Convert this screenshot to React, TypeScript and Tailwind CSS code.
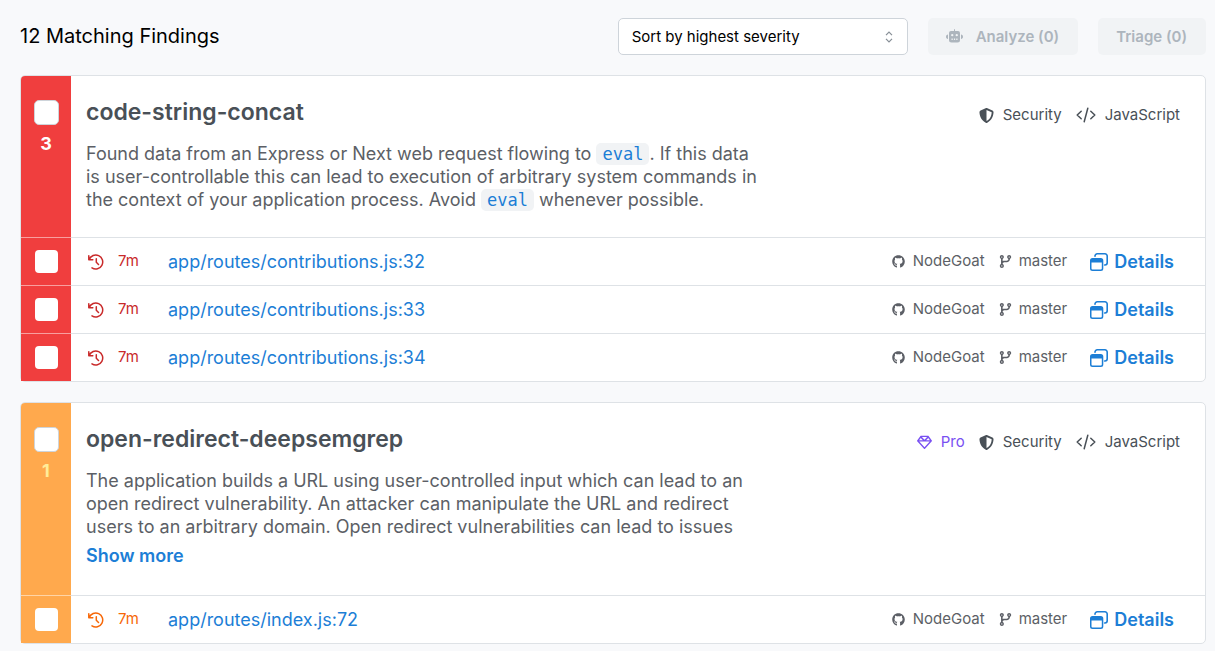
import type { ReactNode } from "react";
import { FaCodeBranch, FaGithub, FaRegGem, FaShieldHalved } from "react-icons/fa6";

type Tone = "red" | "orange";

interface Finding {
  path: string;
  age: string;
  repo: string;
  branch: string;
}

interface Rule {
  name: string;
  tone: Tone;
  pro: boolean;
  description: ReactNode;
  truncated: boolean;
  findings: Finding[];
}

const tones = {
  red: { strip: "bg-[#f03e3e]", count: "text-white", age: "text-[#c92a2a]" },
  orange: { strip: "bg-[#ffa94d]", count: "text-[#ffec99]", age: "text-[#f76707]" },
};

function Code({ children }: { children: ReactNode }) {
  return (
    <code className="rounded-[5px] bg-[#f1f3f5] px-1.5 py-px font-['DejaVu_Sans_Mono',monospace] text-[17px] leading-none text-[#1c7ed6]">
      {children}
    </code>
  );
}

const finding = (path: string): Finding => ({ path, age: "7m", repo: "NodeGoat", branch: "master" });

const rules: Rule[] = [
  {
    name: "code-string-concat",
    tone: "red",
    pro: false,
    truncated: false,
    description: (
      <>
        Found data from an Express or Next web request flowing to <Code>eval</Code>. If this data is
        user-controllable this can lead to execution of arbitrary system commands in the context of
        your application process. Avoid <Code>eval</Code> whenever possible.
      </>
    ),
    findings: [
      finding("app/routes/contributions.js:32"),
      finding("app/routes/contributions.js:33"),
      finding("app/routes/contributions.js:34"),
    ],
  },
  {
    name: "open-redirect-deepsemgrep",
    tone: "orange",
    pro: true,
    truncated: true,
    description:
      "The application builds a URL using user-controlled input which can lead to an open redirect vulnerability. An attacker can manipulate the URL and redirect users to an arbitrary domain. Open redirect vulnerabilities can lead to issues",
    findings: [finding("app/routes/index.js:72")],
  },
];

function RobotIcon() {
  return (
    <svg viewBox="0 0 34 36" className="h-[18px] w-[17px]" aria-hidden="true">
      <g fill="currentColor">
        <rect x="16" y="0" width="2" height="6" rx="1" />
        <path
          fillRule="evenodd"
          d="M10 4h14a4 4 0 0 1 4 4v14a5 5 0 0 1-5 5H11a5 5 0 0 1-5-5V8a4 4 0 0 1 4-4Zm2.500 6a2.300 2.300 0 1 0 0 4.600a2.300 2.300 0 0 0 0-4.600Zm9 0a2.300 2.300 0 1 0 0 4.600a2.300 2.300 0 0 0 0-4.600ZM11 19v3h2.500v-3Zm4.800 0v3h2.500v-3Zm4.700 0v3H23v-3Z"
        />
        <path d="M4 11v9C1.500 20 0 18 0 15.500S1.500 11 4 11ZM30 11v9c2.500 0 4-2 4-4.500S32.500 11 30 11Z" />
      </g>
    </svg>
  );
}

function CodeIcon() {
  return (
    <svg
      viewBox="0 0 20 16"
      className="h-4 w-5"
      fill="none"
      stroke="currentColor"
      strokeWidth="1.5"
      strokeLinecap="round"
      strokeLinejoin="round"
      aria-hidden="true"
    >
      <path d="M5.200 4.200 1.200 8l4 3.800M14.800 4.200l4 3.800-4 3.800M11.800 1.200 8.200 14.800" />
    </svg>
  );
}

function HistoryIcon() {
  return (
    <svg
      viewBox="0 0 16 16"
      className="size-4"
      fill="none"
      stroke="currentColor"
      strokeWidth="1.5"
      strokeLinecap="round"
      strokeLinejoin="round"
      aria-hidden="true"
    >
      <path d="M.8 1.700v4h4M1.200 5.400A7 7 0 1 1 4 13.900M8.300 4.700v3.600l2.200 2.200" />
    </svg>
  );
}

function WindowsIcon() {
  return (
    <svg viewBox="0 0 18 18" className="size-[18px]" aria-hidden="true">
      <path
        d="M5 3.300V3a2.200 2.200 0 0 1 2.200-2.200H15A2.200 2.200 0 0 1 17.200 3v6.800A2.200 2.200 0 0 1 15 12h-.4"
        fill="none"
        stroke="currentColor"
        strokeWidth="1.600"
        strokeLinecap="round"
      />
      <path
        fill="currentColor"
        fillRule="evenodd"
        d="M2.500 5h8.300a2.500 2.500 0 0 1 2.500 2.500v8a2.500 2.500 0 0 1-2.500 2.500H2.500A2.500 2.500 0 0 1 0 15.500v-8A2.500 2.500 0 0 1 2.500 5Zm-1 4.500v6a1 1 0 0 0 1 1h8.300a1 1 0 0 0 1-1v-6Z"
      />
    </svg>
  );
}

function SelectorIcon() {
  return (
    <svg
      viewBox="0 0 8 12"
      className="pointer-events-none absolute right-[15px] h-3 w-2 text-[#868e96]"
      fill="none"
      stroke="currentColor"
      strokeWidth="1.200"
      aria-hidden="true"
    >
      <path d="M1 4.200 4 1.200l3 3M1 7.800l3 3 3-3" />
    </svg>
  );
}

function Tag({ icon, label }: { icon: ReactNode; label: string }) {
  return (
    <span className="flex items-center gap-[9px]">
      {icon}
      {label}
    </span>
  );
}

function FindingRow({ item, tone }: { item: Finding; tone: Tone }) {
  const t = tones[tone];
  return (
    <li className="flex h-12">
      <div className={`flex w-[50px] shrink-0 items-center justify-center border-t border-white/50 ${t.strip}`}>
        <input
          type="checkbox"
          aria-label={`Select ${item.path}`}
          className="size-[23px] appearance-none rounded-[4px] bg-white"
        />
      </div>
      <div className="flex min-w-0 flex-1 items-center border-t border-[#dee2e6] pr-[31px] pl-[17px]">
        <span className={`flex w-20 shrink-0 items-center gap-3.5 text-[15px] ${t.age}`}>
          <HistoryIcon />
          {item.age}
        </span>
        <a href="#finding" className="min-w-0 flex-1 truncate text-[#1c7ed6]">
          {item.path}
        </a>
        <span className="flex items-center gap-2 text-[15px] text-[#5c5f66]">
          <FaGithub className="size-[13px]" />
          {item.repo}
        </span>
        <span className="ml-3.5 flex items-center gap-[7px] text-[15px] text-[#5c5f66]">
          <FaCodeBranch className="size-[13px]" />
          {item.branch}
        </span>
        <a href="#details" className="ml-[23px] flex items-center gap-1.5 font-semibold text-[#1c7ed6]">
          <WindowsIcon />
          Details
        </a>
      </div>
    </li>
  );
}

function RuleCard({ rule }: { rule: Rule }) {
  const t = tones[rule.tone];
  return (
    <section className="rounded-[5px] border border-[#dee2e6] bg-white">
      <div className="flex">
        <div className={`flex w-[50px] shrink-0 flex-col items-center rounded-tl-[4px] pt-6 ${t.strip}`}>
          <input
            type="checkbox"
            aria-label={`Select all ${rule.name} findings`}
            className="size-[25px] appearance-none rounded-[5px] border border-[#ced4da] bg-white"
          />
          <span className={`mt-[7px] text-[18px] leading-6 font-bold ${t.count}`}>{rule.findings.length}</span>
        </div>
        <div className="flex min-w-0 flex-1 justify-between pt-[22px] pr-[25px] pb-[26px] pl-[15px]">
          <div className="w-[680px]">
            <h2 className="text-[23px] leading-7 font-semibold text-[#495057]">{rule.name}</h2>
            <p className="mt-4 leading-[23px] text-[#5c5f66]">{rule.description}</p>
            {rule.truncated && (
              <button type="button" className="mt-1 block leading-[27px] font-semibold text-[#1c7ed6]">
                Show more
              </button>
            )}
          </div>
          <div className="mt-1.5 flex h-[22px] items-center gap-[14px] text-[15px] text-[#495057]">
            {rule.pro && (
              <span className="text-[#7950f2]">
                <Tag icon={<FaRegGem className="size-[15px]" />} label="Pro" />
              </span>
            )}
            <Tag icon={<FaShieldHalved className="size-[15px]" />} label="Security" />
            <Tag icon={<CodeIcon />} label="JavaScript" />
          </div>
        </div>
      </div>
      <ul>
        {rule.findings.map((item) => (
          <FindingRow key={item.path} item={item} tone={rule.tone} />
        ))}
      </ul>
    </section>
  );
}

export default function App() {
  return (
    <main className="min-h-screen bg-[#f8f9fb] pt-[18px] pr-[9px] pb-2 pl-5 font-[Inter,sans-serif] text-[18px]">
      <header className="flex items-center gap-5">
        <h1 className="flex-1 pb-0.5 text-[20px] text-black">12 Matching Findings</h1>
        <div className="relative flex w-[290px] items-center">
          <select
            aria-label="Sort findings"
            className="h-[37px] w-full appearance-none rounded-[5px] border border-[#ced4da] bg-white px-[13px] pt-0.5 text-[15px] text-black"
          >
            <option>Sort by highest severity</option>
          </select>
          <SelectorIcon />
        </div>
        <button
          type="button"
          disabled
          className="flex h-[37px] items-center gap-[13px] rounded-[5px] bg-[#f1f3f5] pt-0.5 pr-[19px] pl-[18px] text-[15px] font-semibold text-[#adb5bd]"
        >
          <RobotIcon />
          Analyze (0)
        </button>
        <button
          type="button"
          disabled
          className="h-[37px] rounded-[5px] bg-[#f1f3f5] pt-0.5 pr-[19px] pl-[18px] text-[15px] font-semibold text-[#adb5bd]"
        >
          Triage (0)
        </button>
      </header>
      <div className="mt-5 flex flex-col gap-5">
        {rules.map((rule) => (
          <RuleCard key={rule.name} rule={rule} />
        ))}
      </div>
    </main>
  );
}
